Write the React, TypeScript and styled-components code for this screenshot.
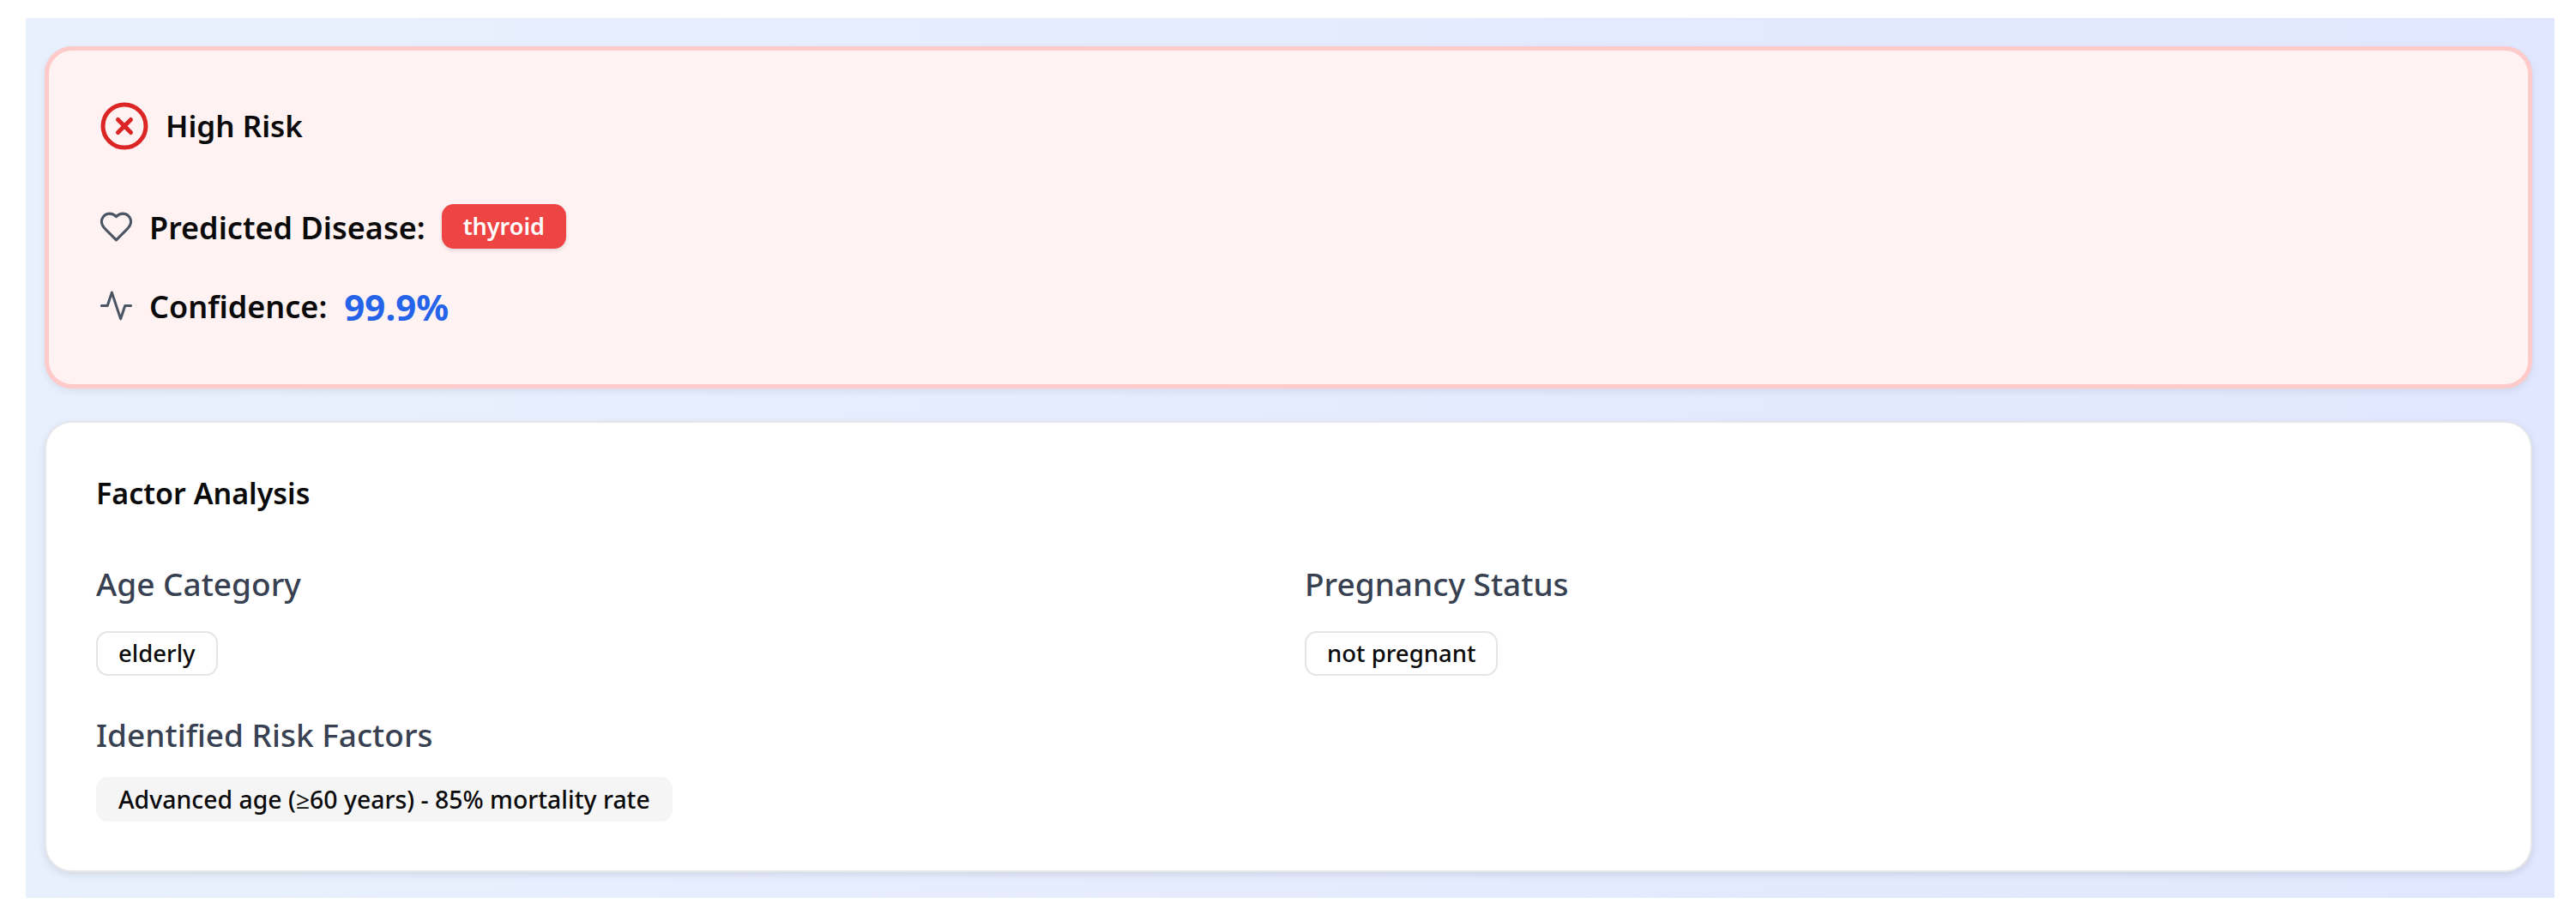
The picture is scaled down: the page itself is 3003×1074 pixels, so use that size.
import React from 'react'
import styled, { createGlobalStyle } from 'styled-components'
import { CircleX } from 'lucide-react'

const GlobalStyle = createGlobalStyle`
  html, body {
    margin: 0;
    background: #fff;
    font-family: "Noto Sans", "Open Sans", sans-serif;
  }
`

const Page = styled.div`
  width: 3003px;
  height: 1074px;
  box-sizing: border-box;
  padding: 21px 25px 27px 30px;
`

const Panel = styled.main`
  height: 100%;
  box-sizing: border-box;
  padding: 33px 26px 30px 22px;
  display: flex;
  flex-direction: column;
  gap: 38px;
  background: linear-gradient(90deg, #e9f0fd, #e1e7fe);
`

const RiskCard = styled.section`
  height: 399px;
  box-sizing: border-box;
  padding: 58px 58px;
  background: #fef2f2;
  border: 5px solid #fecaca;
  border-radius: 32px;
  box-shadow: 0 3px 8px rgba(0, 0, 0, 0.08);
`

const RiskHeader = styled.div`
  display: flex;
  align-items: center;
  gap: 18px;
  margin-bottom: 62px;
  color: #dc2626;
`

const RiskTitle = styled.h2`
  margin: 0;
  font-size: 35px;
  line-height: 56px;
  font-weight: 600;
  color: #0a0a0a;
`

const InfoRow = styled.div<{ $gap: number }>`
  display: flex;
  align-items: center;
  gap: 18px;
  height: 52px;
  margin-bottom: ${p => p.$gap}px;
  color: #4b5563;
`

const InfoIcon = styled.svg`
  width: 41px;
  height: 41px;
  flex: none;
  margin-top: -2px;
  fill: none;
  stroke: currentColor;
  stroke-width: 1.8;
  stroke-linecap: round;
  stroke-linejoin: round;
`

const InfoLabel = styled.span`
  font-size: 36px;
  font-weight: 600;
  color: #0a0a0a;
`

const DiseaseBadge = styled.span`
  margin: -3px 0 0 1px;
  padding: 8px 25px;
  font-size: 27px;
  line-height: 36px;
  font-weight: 600;
  color: #fff;
  background: #ef4444;
  border-radius: 14px;
  box-shadow: 0 2px 4px rgba(0, 0, 0, 0.12);
`

const ConfidenceValue = styled.span`
  margin-left: 2px;
  font-size: 42px;
  font-weight: 700;
  color: #2563eb;
`

const FactorCard = styled.section`
  flex: 1;
  box-sizing: border-box;
  padding: 58px 56px 0 58px;
  background: #fff;
  border: 2px solid #e5e7eb;
  border-radius: 32px;
  box-shadow: 0 3px 8px rgba(0, 0, 0, 0.1);
`

const FactorTitle = styled.h3`
  margin: 0 0 57px;
  font-size: 34px;
  line-height: 48px;
  font-weight: 600;
  color: #0a0a0a;
`

const FactorGrid = styled.div`
  display: grid;
  grid-template-columns: 1fr 1fr;
  column-gap: 36px;
  row-gap: 44px;
`

const FactorGroup = styled.div<{ $wide?: boolean }>`
  grid-column: ${p => (p.$wide ? '1 / -1' : 'auto')};
`

const GroupLabel = styled.h4<{ $tight?: boolean }>`
  margin: 0 0 ${p => (p.$tight ? 24 : 30)}px;
  font-size: 37px;
  line-height: 50px;
  font-weight: 500;
  color: #374151;
`

const Chip = styled.span<{ $muted?: boolean }>`
  display: block;
  width: fit-content;
  padding: 6px 24px;
  font-size: ${p => (p.$muted ? 28.4 : 27.5)}px;
  line-height: 36px;
  font-weight: 500;
  color: #0a0a0a;
  border-radius: 14px;
  border: 2px solid ${p => (p.$muted ? '#f5f5f5' : '#e5e5e5')};
  background: ${p => (p.$muted ? '#f5f5f5' : '#fff')};
`

export default function App() {
  return (
    <Page>
      <GlobalStyle />
      <Panel>
        <RiskCard>
          <RiskHeader>
            <CircleX size={60} strokeWidth={2} />
            <RiskTitle>High Risk</RiskTitle>
          </RiskHeader>
          <InfoRow $gap={40}>
            <InfoIcon viewBox="0 0 24 24">
              <path d="M19 14c1.49-1.46 3-3.21 3-5.5A5.5 5.5 0 0 0 16.5 3c-1.76 0-3 .5-4.5 2-1.5-1.5-2.74-2-4.5-2A5.5 5.5 0 0 0 2 8.5c0 2.3 1.5 4.05 3 5.5l7 7Z" />
            </InfoIcon>
            <InfoLabel>Predicted Disease:</InfoLabel>
            <DiseaseBadge>thyroid</DiseaseBadge>
          </InfoRow>
          <InfoRow $gap={0}>
            <InfoIcon viewBox="0 0 24 24">
              <path d="M22 12h-4l-3 9L9 3l-3 9H2" />
            </InfoIcon>
            <InfoLabel>Confidence:</InfoLabel>
            <ConfidenceValue>99.9%</ConfidenceValue>
          </InfoRow>
        </RiskCard>
        <FactorCard>
          <FactorTitle>Factor Analysis</FactorTitle>
          <FactorGrid>
            <FactorGroup>
              <GroupLabel>Age Category</GroupLabel>
              <Chip>elderly</Chip>
            </FactorGroup>
            <FactorGroup>
              <GroupLabel>Pregnancy Status</GroupLabel>
              <Chip>not pregnant</Chip>
            </FactorGroup>
            <FactorGroup $wide>
              <GroupLabel $tight>Identified Risk Factors</GroupLabel>
              <Chip $muted>Advanced age (≥60 years) - 85% mortality rate</Chip>
            </FactorGroup>
          </FactorGrid>
        </FactorCard>
      </Panel>
    </Page>
  )
}
